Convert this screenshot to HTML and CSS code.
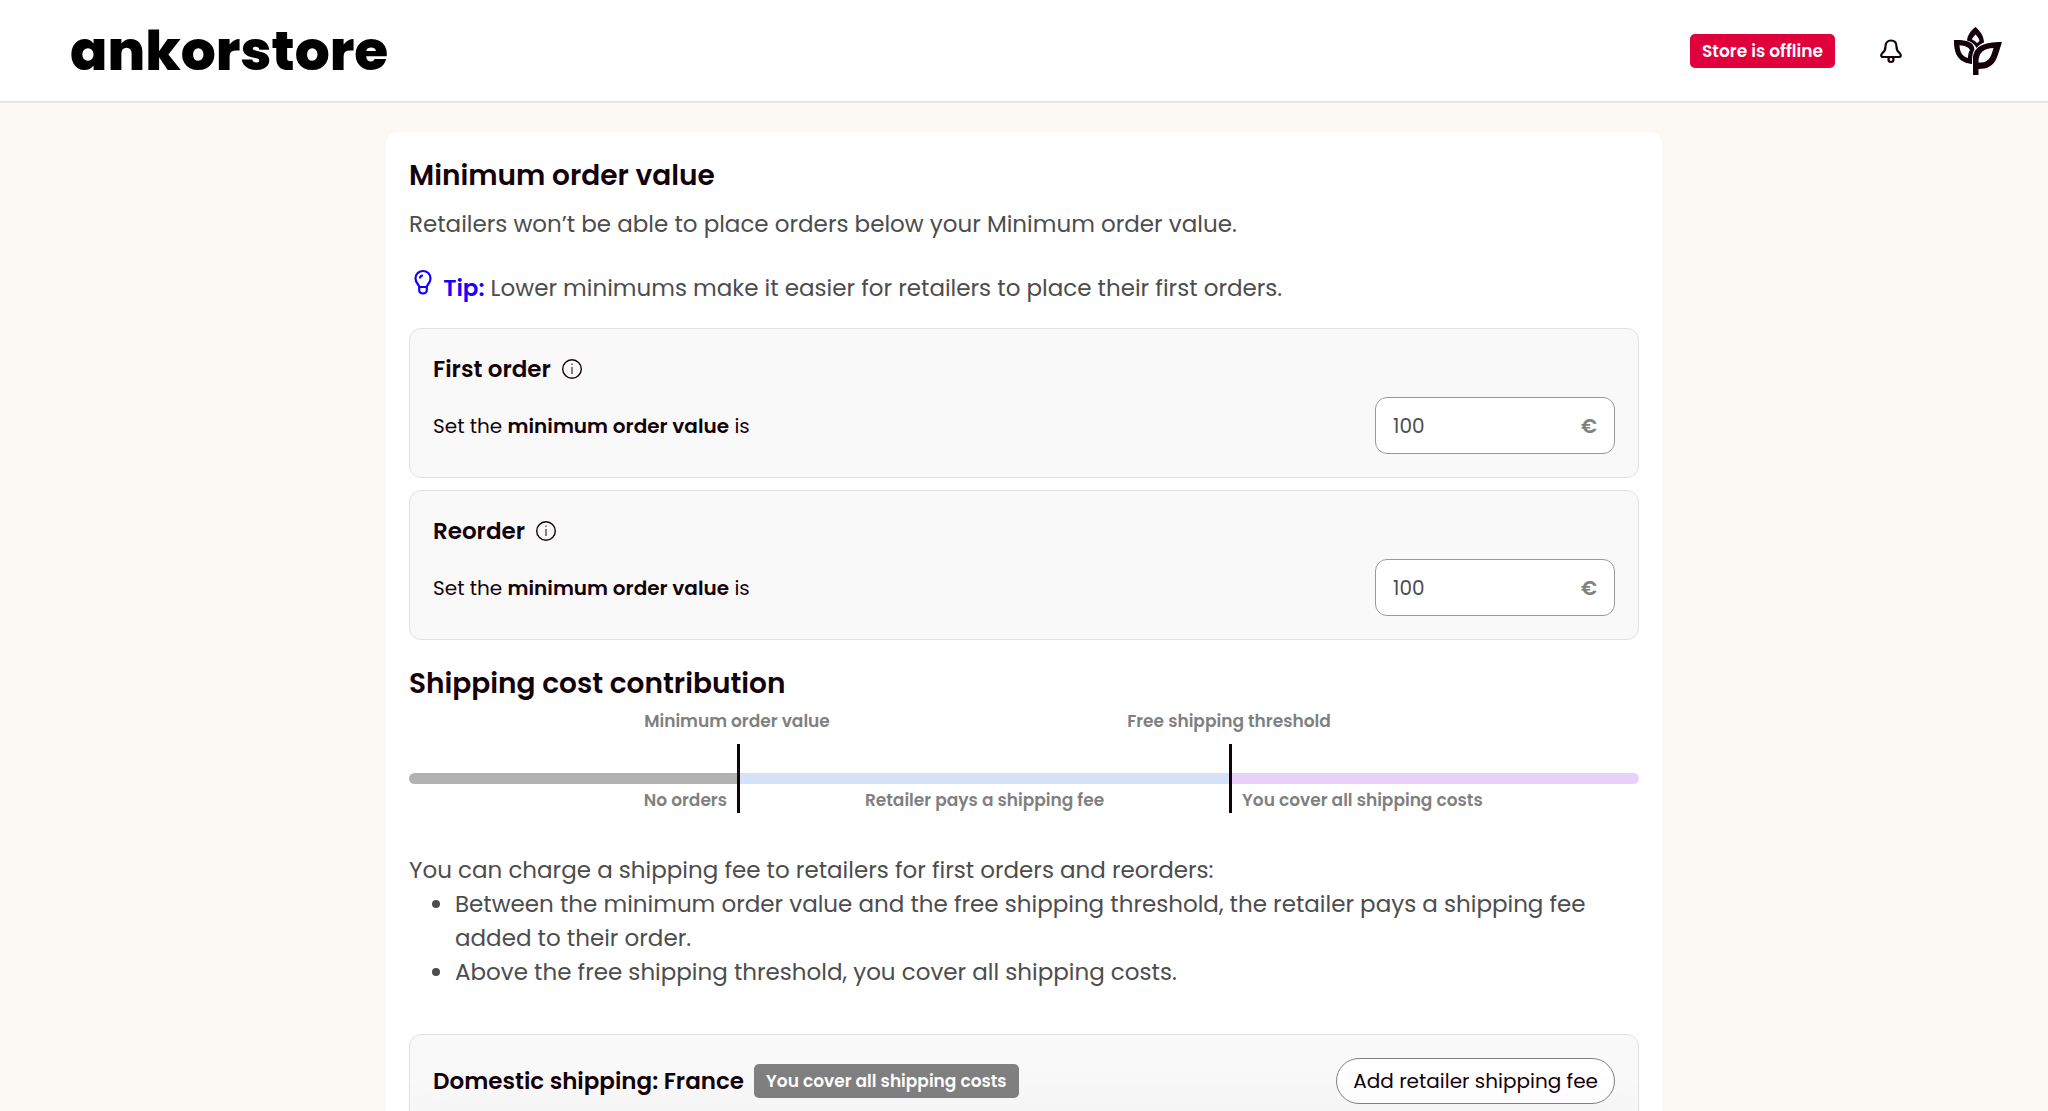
FILE: index.html
```
<!DOCTYPE html>
<html lang="en">
<head>
  <meta charset="UTF-8">
  <meta name="viewport" content="width=device-width, initial-scale=1.0">
  <title>Ankorstore - Order settings</title>
  <link rel="stylesheet" href="styles.css">
</head>
<body>
  <header class="header">
    <a href="#" class="logo">ankorstore</a>
    <div class="header-right">
      <span class="tag tag-red">Store is offline</span>
      <button type="button" class="icon-btn bell" aria-label="Notifications">
        <svg width="24" height="26" viewBox="0 0 24 26" fill="none" stroke="#14020a" stroke-width="2.2">
          <path d="M12 2.500C8.500 2.500 6.500 5 6.500 8.500C6.500 12.500 5.500 13.500 3.300 15.200C1.500 16.800 2 19 4 19H20C22 19 22.500 16.800 20.700 15.200C18.500 13.500 17.500 12.500 17.500 8.500C17.500 5 15.500 2.500 12 2.500Z"/>
          <circle cx="12" cy="21.500" r="2.500"/>
        </svg>
      </button>
      <button type="button" class="icon-btn" aria-label="Account">
        <svg width="48" height="48" viewBox="0 0 48 48" fill="#14020a" fill-rule="evenodd">
          <path d="M21.500 0C26 4 30 9 30 15.500C27 16.500 24.500 18.500 22.500 21C20.500 17 17.500 14.500 13 13.500C13.500 8 17 3.500 21.500 0ZM21.500 7.500C19.500 9.500 18.500 11 18 12.500C20 13.500 21.700 14.500 23 16.200C24 15 24.700 14.500 25.600 13.900C25 11.500 23.500 9.500 21.500 7.500Z"/>
          <path d="M0 13C9 12.500 20 13.500 20.500 22.500C18.500 25.500 18 29 18 37C7 36 -0.500 30 0 13ZM5.500 18.200C5.800 24.500 8 29.500 14 31C14 27.500 14.500 25.500 16 23C14.500 20 10.500 18.500 5.500 18.200Z"/>
          <path d="M19 48V32C19 20 29 15 48 15C46 21 44.500 27 42.500 31.500C39.500 39 33 42 24.500 42V48ZM24.500 35.500C30 36 34.500 34 36.800 29C38 26 38.700 24 39.500 21C30.500 21.500 24.200 25 24.500 35.500Z"/>
        </svg>
      </button>
    </div>
  </header>

  <main class="card">
    <h2>Minimum order value</h2>
    <p class="text">Retailers won’t be able to place orders below your Minimum order value.</p>
    <p class="text tip">
      <svg class="bulb" width="28" height="28" viewBox="0 0 28 28" fill="none" stroke="#1400ff" stroke-width="2.2">
        <path d="M10.200 19C10.200 16.500 6.500 15 6.500 10.500C6.500 6 10 3 14 3S21.500 6 21.500 10.500C21.500 15 17.800 16.500 17.800 19ZM10.200 19V22C10.200 26.500 17.800 26.500 17.800 22V19M11 10.500C11 8.500 12.300 7.500 14 7.500"/>
      </svg>
      <strong>Tip:</strong> Lower minimums make it easier for retailers to place their first orders.
    </p>

    <section class="panel">
      <h3>First order
        <svg width="22" height="22" viewBox="0 0 22 22" fill="none" stroke="#14020a">
          <circle cx="11" cy="11" r="9.300" stroke-width="1.400"/>
          <path d="M11 9V16M11 5.500V7"/>
        </svg>
      </h3>
      <div class="row">
        <label for="first-order">Set the <strong>minimum order value</strong> is</label>
        <div class="amount">
          <input type="text" id="first-order" value="100">
          <span>€</span>
        </div>
      </div>
    </section>

    <section class="panel">
      <h3>Reorder
        <svg width="22" height="22" viewBox="0 0 22 22" fill="none" stroke="#14020a">
          <circle cx="11" cy="11" r="9.300" stroke-width="1.400"/>
          <path d="M11 9V16M11 5.500V7"/>
        </svg>
      </h3>
      <div class="row">
        <label for="reorder">Set the <strong>minimum order value</strong> is</label>
        <div class="amount">
          <input type="text" id="reorder" value="100">
          <span>€</span>
        </div>
      </div>
    </section>

    <h2 class="shipping-title">Shipping cost contribution</h2>
    <div class="scale">
      <div class="scale-top">
        <span>Minimum order value</span>
        <span>Free shipping threshold</span>
      </div>
      <div class="scale-zones">
        <div class="zone zone-none">
          <div class="bar"></div>
          <span>No orders</span>
        </div>
        <div class="zone zone-fee">
          <div class="bar"></div>
          <span>Retailer pays a shipping fee</span>
        </div>
        <div class="zone zone-free">
          <div class="bar"></div>
          <span>You cover all shipping costs</span>
        </div>
      </div>
    </div>

    <div class="text details">
      <p>You can charge a shipping fee to retailers for first orders and reorders:</p>
      <ul>
        <li>Between the minimum order value and the free shipping threshold, the retailer pays a shipping fee added to their order.</li>
        <li>Above the free shipping threshold, you cover all shipping costs.</li>
      </ul>
    </div>

    <section class="panel">
      <div class="row">
        <h3>Domestic shipping: France <span class="tag tag-grey">You cover all shipping costs</span></h3>
        <button type="button" class="btn">Add retailer shipping fee</button>
      </div>
    </section>
  </main>
  <div class="fade"></div>
</body>
</html>
```
FILE: styles.css
```
* {
  box-sizing: border-box;
}

body {
  margin: 0;
  height: 100vh;
  overflow: hidden;
  background: #fcf9f4;
  color: #14020a;
  font-family: Poppins, Inter, sans-serif;
  font-size: 20px;
}

h2, h3, p, ul {
  margin: 0;
}

strong, h2, h3 {
  font-weight: 600;
}

.header {
  display: flex;
  align-items: center;
  justify-content: space-between;
  height: 103px;
  padding: 0 46px 0 70px;
  background: #fff;
  border-bottom: 2px solid #e5e5e5;
}

.logo {
  color: #000;
  font-size: 55px;
  font-weight: 800;
  text-decoration: none;
}

.header-right {
  display: flex;
  align-items: center;
}

.icon-btn {
  display: flex;
  padding: 0;
  border: none;
  background: none;
  cursor: pointer;
}

.bell {
  margin: 0 51px 0 44px;
}

.tag {
  display: inline-block;
  padding: 0 12px;
  border-radius: 5px;
  color: #fff;
  font-size: 17px;
  font-weight: 600;
  line-height: 34px;
  white-space: nowrap;
}

.tag-red {
  background: #e0003c;
}

.tag-grey {
  background: #808080;
}

.card {
  max-width: 1276px;
  margin: 29px auto 0;
  padding: 24px 23px;
  border-radius: 12px;
  background: #fff;
}

h2 {
  font-size: 28px;
  line-height: 40px;
}

h3 {
  display: flex;
  align-items: center;
  gap: 10px;
  font-size: 23px;
  line-height: 34px;
}

.text {
  color: #4d4d4d;
  font-size: 23px;
  line-height: 34px;
}

h2 + .text {
  margin-top: 11px;
}

.tip {
  margin: 27px 0 23px;
}

.tip strong {
  color: #1400ff;
}

/* order value panels */
.panel {
  padding: 23px;
  border: 1px solid #e2e2e2;
  border-radius: 12px;
  background: #f9f9f9;
}

.panel + .panel {
  margin-top: 12px;
}

.row {
  display: flex;
  align-items: center;
  justify-content: space-between;
}

h3 + .row {
  margin-top: 11px;
}

.amount {
  display: flex;
  align-items: center;
  width: 240px;
  height: 57px;
  padding: 0 17px;
  border: 1px solid #999;
  border-radius: 12px;
  background: #fff;
  color: #808080;
  font-weight: 600;
}

.amount input {
  flex: 1;
  min-width: 0;
  padding: 0;
  border: none;
  outline: none;
  background: none;
  color: #4d4d4d;
  font: inherit;
  font-weight: 400;
}

/* shipping scale */
.shipping-title {
  margin-top: 24px;
}

.scale {
  color: #808080;
  font-size: 17px;
  font-weight: 600;
  line-height: 24px;
}

.scale-top {
  display: grid;
  grid-template-columns: 8fr 4fr 3fr;
  margin: 5px 0 11px;
  text-align: center;
}

.scale-zones {
  display: grid;
  grid-template-columns: 4fr 6fr 5fr;
}

.zone {
  padding: 29px 0 1px;
}

.zone + .zone {
  border-left: 3px solid #14020a;
}

.zone span {
  display: block;
  padding: 0 10px;
}

.bar {
  height: 11px;
  margin-bottom: 4px;
}

.zone-none {
  text-align: right;
}

.zone-none .bar {
  background: #b2b2b2;
  border-radius: 6px 0 0 6px;
}

.zone-fee {
  text-align: center;
}

.zone-fee .bar {
  background: #d6e1fa;
}

.zone-free .bar {
  background: #e8d0fb;
  border-radius: 0 6px 6px 0;
}

.details {
  margin: 40px 0 45px;
}

.details ul {
  padding-left: 46px;
}

.btn {
  height: 46px;
  padding: 0 16px;
  border: 1px solid #808080;
  border-radius: 23px;
  background: #fff;
  color: #14020a;
  font: inherit;
  white-space: nowrap;
  cursor: pointer;
}

/* soft shadow along the bottom edge of the window */
.fade {
  position: fixed;
  right: 20%;
  bottom: -60px;
  left: 20%;
  height: 60px;
  box-shadow: 0 0 60px rgba(0, 0, 0, 0.04);
  pointer-events: none;
}
```
